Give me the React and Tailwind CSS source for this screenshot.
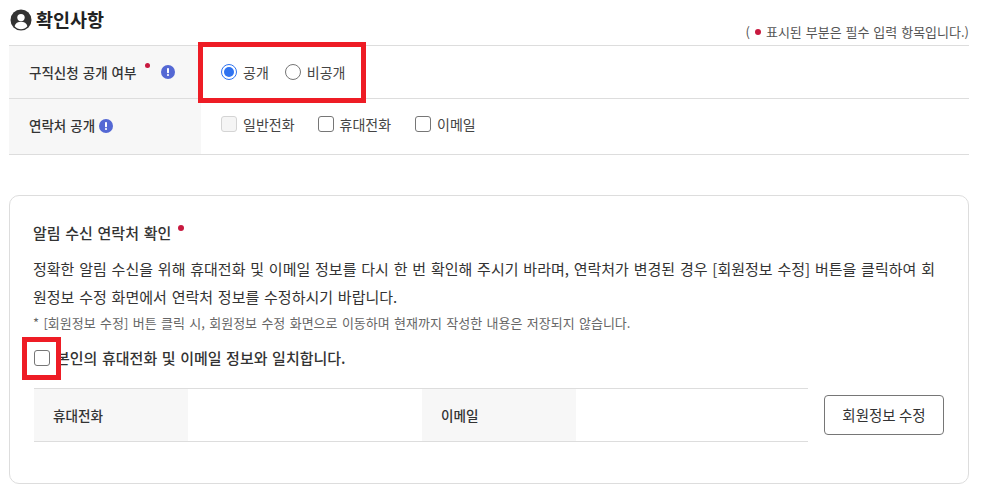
const font = '[font-family:"Noto_Sans_CJK_KR","Noto_Sans",sans-serif]';

function Info({ className = "" }) {
  return (
    <span className={`inline-flex h-[14px] w-[14px] shrink-0 items-center justify-center rounded-full bg-[#5468d4] ${className}`}>
      <svg width="14" height="14" viewBox="0 0 14 14">
        <rect x="6" y="3" width="2" height="5.2" rx="0.8" fill="#fff" />
        <circle cx="7" cy="10" r="1.1" fill="#fff" />
      </svg>
    </span>
  );
}

const Dot = ({ className = "" }) => <span className={`inline-block h-[5px] w-[5px] rounded-full bg-[#c8193f] ${className}`} />;

function Check({ label, disabled }) {
  return (
    <label className="flex items-center gap-[6px]">
      <span className={`h-4 w-4 rounded-[3px] border ${disabled ? "border-[#d4d4d4] bg-[#f5f5f5]" : "border-[#767676] bg-white"}`} />
      <span className="text-[14px] leading-5 text-[#444]">{label}</span>
    </label>
  );
}

export default function App() {
  return (
    <div className={`relative h-[495px] w-[982px] overflow-hidden bg-white pl-[9px] pr-[13px] ${font}`}>
      <div className="flex h-[45px] items-start justify-between">
        <div className="flex items-center gap-[4px] pl-[1px] pt-[9px]">
          <svg width="22" height="22" viewBox="0 0 22 22">
            <circle cx="11" cy="11" r="10.5" fill="#333" />
            <circle cx="11" cy="8.6" r="3.7" fill="#fff" />
            <path d="M4.6 17.2c.7-3 3.3-4.4 6.4-4.4s5.7 1.4 6.4 4.4c-1.6 1.9-3.9 3-6.4 3s-4.8-1.1-6.4-3z" fill="#fff" />
          </svg>
          <h2 className="-mt-[2px] text-[18.5px] font-bold leading-[24px] text-[#222]">확인사항</h2>
        </div>
        <p className="mt-[23px] flex items-center text-[13px] leading-[18px] text-[#555] [word-spacing:1px]">
          (<Dot className="mx-[5px] h-[6px] w-[6px]" />표시된 부분은 필수 입력 항목입니다.)
        </p>
      </div>

      <div className="border-t border-[#dddddd]">
        <div className="flex h-[53px] border-b border-[#dddddd]">
          <div className="flex w-[192px] items-center bg-[#f7f7f7] pl-5 text-[13.5px] font-medium text-[#333] [word-spacing:1px]">
            구직신청 공개 여부
            <Dot className="mb-[14px] ml-[9px]" />
            <Info className="ml-[11px]" />
          </div>
          <div className="flex items-center pl-5 text-[14px] text-[#444]">
            <span className="flex h-4 w-4 items-center justify-center rounded-full border border-[#2f73f0]">
              <span className="h-[10px] w-[10px] rounded-full bg-[#2f73f0]" />
            </span>
            <span className="ml-[6px]">공개</span>
            <span className="ml-[16px] h-4 w-4 rounded-full border border-[#767676]" />
            <span className="ml-[6px]">비공개</span>
          </div>
        </div>
        <div className="flex h-[56px] border-b border-[#dddddd]">
          <div className="flex w-[192px] items-center bg-[#f7f7f7] pb-[2px] pl-5 text-[13.5px] font-medium text-[#333] [word-spacing:1px]">
            연락처 공개
            <Info className="ml-[4px]" />
          </div>
          <div className="flex items-start gap-[23px] pl-5 pt-[15px]">
            <Check label="일반전화" disabled />
            <Check label="휴대전화" />
            <span className="ml-[1px]"><Check label="이메일" /></span>
          </div>
        </div>
      </div>

      <div className="mt-[40px] h-[289px] rounded-[10px] border border-[#dddddd] px-[23px] pt-[25px]">
        <div className="flex items-start text-[15px] font-medium leading-[24px] text-[#333] [word-spacing:1.3px]">
          알림 수신 연락처 확인
          <Dot className="ml-[7px] mt-[4px] h-[6px] w-[6px]" />
        </div>
        <p className="mt-[10px] text-[15px] leading-[28px] text-[#333] [word-spacing:1.45px]">
          정확한 알림 수신을 위해 휴대전화 및 이메일 정보를 다시 한 번 확인해 주시기 바라며, 연락처가 변경된 경우 [회원정보 수정] 버튼을 클릭하여 회원정보 수정 화면에서 연락처 정보를 수정하시기 바랍니다.
        </p>
        <p className="mt-[3px] text-[13px] leading-[18px] text-[#666] [word-spacing:1.45px]">* [회원정보 수정] 버튼 클릭 시, 회원정보 수정 화면으로 이동하며 현재까지 작성한 내용은 저장되지 않습니다.</p>
        <div className="ml-[1px] mt-[14px] flex items-center gap-[6px] text-[15px] font-medium leading-[24px] text-[#333] [word-spacing:1.2px]">
          <span className="h-4 w-4 shrink-0 rounded-[3px] border border-[#767676] bg-white" />
          <span>본인의 휴대전화 및 이메일 정보와 일치합니다.</span>
        </div>
        <div className="ml-[1px] mt-[18px] flex items-center">
          <div className="flex h-[54px] w-[774px] border-y border-[#dddddd] text-[13.6px] font-medium text-[#333]">
            <div className="flex w-[154px] items-center bg-[#f7f7f7] pl-[19px]">휴대전화</div>
            <div className="w-[234px]" />
            <div className="flex w-[154px] items-center bg-[#f7f7f7] pl-[19px]">이메일</div>
            <div className="flex-1" />
          </div>
          <button className="ml-[16px] h-[40px] w-[120px] rounded-[4px] border border-[#767676] bg-white text-[14.5px] text-[#333]">회원정보 수정</button>
        </div>
      </div>

      <div className="absolute left-[198px] top-[42px] h-[61px] w-[168px] border-[5px] border-[#ee1c25]" />
      <div className="absolute left-[22px] top-[337px] h-[43px] w-[39px] border-[5px] border-[#ee1c25]" />
    </div>
  );
}
